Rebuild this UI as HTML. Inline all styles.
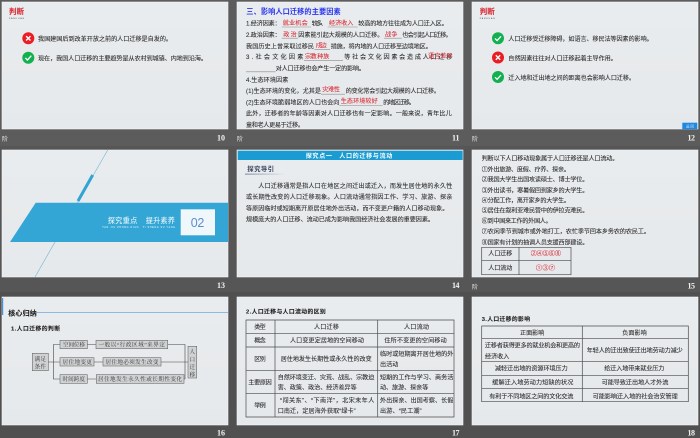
<!DOCTYPE html>
<html lang="zh"><head><meta charset="utf-8"><style>
html,body{margin:0;padding:0;width:700px;height:438px;overflow:hidden;background:#5a5a5a}
svg{display:block;filter:blur(.3px)}
text{font-family:"Liberation Sans","Noto Sans CJK SC",sans-serif;font-size:6.1px;fill:#2e2e2e;stroke:#2e2e2e;stroke-width:.1}
.r{fill:#d8323c;stroke:#d8323c}
.b{font-weight:700;fill:#222;font-size:5.8px}
.n{font-family:"Liberation Serif",serif;font-weight:700;fill:#f4f4f4;font-size:8px;stroke:none}
.g{font-size:6px;fill:#e8e8e8;stroke:none}
.s{font-family:"Liberation Serif","Noto Serif CJK SC",serif;font-size:5.6px;fill:#333;stroke:none}
.w{fill:#fff;stroke:none}
.sl{fill:url(#p);stroke:#f6f7f8;stroke-width:.6}
.ln{stroke:#8a8a8a;stroke-width:.6;fill:none}
.tb{stroke:#4a4a4a;stroke-width:.7;fill:none}
.bx{fill:#cfd2d3;stroke:#6a6a6a;stroke-width:.6}
.c{stroke:#444;stroke-width:.6;fill:none}
</style></head><body>
<svg width="700" height="438" viewBox="0 0 700 438" xmlns="http://www.w3.org/2000/svg">
<defs>
<linearGradient id="p" x1="0" y1="0" x2="0" y2="1"><stop offset="0" stop-color="#e9ecee"/><stop offset="1" stop-color="#e6e9eb"/></linearGradient>
<linearGradient id="u" x1="0" y1="0" x2="1" y2="0"><stop offset="0" stop-color="#5a6a88"/><stop offset="1" stop-color="#e6eaec"/></linearGradient>
<g id="ok"><circle r="6" fill="#12b04f"/><path d="M-3 .2L-.9 2.3L3 -2" stroke="#fff" stroke-width="1.3" fill="none"/></g>
<g id="no"><circle r="6" fill="#ec1c24"/><path d="M-2.2 -2.2L2.2 2.2M2.2 -2.2L-2.2 2.2" stroke="#fff" stroke-width="1.4" fill="none"/></g>
</defs>
<rect width="700" height="146" fill="#5c5c5c"/><rect y="146" width="700" height="146" fill="#565656"/><rect y="292" width="700" height="146" fill="#505050"/>

<!-- slide 10 -->
<rect class="sl" x="2" y="2" width="226" height="127"/>
<text class="r" x="9" y="14" textLength="15" style="font-size:7.5px;font-weight:700">判断</text>
<text x="9" y="19" textLength="15" style="font-size:2px;fill:#333;stroke:none">PANDUAN</text>
<use href="#no" x="28.3" y="38.3"/><use href="#ok" x="28.3" y="57.7"/>
<text x="38" y="41" textLength="134">我国建国后到改革开放之前的人口迁移是自发的。</text>
<text x="38" y="60.4" textLength="169">现在，我国人口迁移的主要趋势是从农村到城镇、内地到沿海。</text>
<text class="g" x="2" y="141">阶</text><text class="n" x="217" y="140.5" textLength="8">10</text>

<!-- slide 11 -->
<rect class="sl" x="237" y="2" width="226" height="127"/>
<text x="246.3" y="14" textLength="94.4" style="font-weight:700;fill:#2a35ee;font-size:7.2px;stroke:none">三、影响人口迁移的主要因素</text>
<text x="246" y="25.7" textLength="34.7">1.经济因素：</text><text class="r" x="282.7" y="25.2" textLength="25">就业机会</text>
<text x="311.7" y="25.7" textLength="15">较多、</text><text class="r" x="329" y="25.2" textLength="24.3">经济收入</text>
<text x="358.3" y="25.7" textLength="89.4">较高的地方往往成为人口迁入区。</text>
<text x="246" y="37.1" textLength="34.7">2.政治因素：</text><text class="r" x="283.3" y="36.4" textLength="13.4">政治</text>
<text x="298.3" y="37.1" textLength="85">因素能引起大规模的人口迁移。</text><text class="r" x="385" y="36.4" textLength="12.3">战争</text>
<text x="402.3" y="37.1" textLength="49.4">也会引起人口迁移。</text>
<text x="246" y="48.4" textLength="68">我国历史上曾采取过移民</text><text class="r" x="315.7" y="47.6" textLength="11">戍边</text>
<text x="330.7" y="48.4" textLength="101">措施，将内地的人口迁移至边境地区。</text>
<text x="246" y="59.1" textLength="57.3">3.社会文化因素</text><text class="r" x="305" y="58.3" textLength="11.7">宗教</text><text class="r" x="317.3" y="58.3" textLength="12">种族</text>
<text x="344.3" y="59.1" textLength="108">等社会文化因素会造成人口迁移</text><text class="r" x="428" y="58" textLength="24.7">语言差异</text>
<text x="275.7" y="70.7" textLength="89.3">对人口迁移也会产生一定的影响。</text>
<text x="246" y="82.1" textLength="42.3">4.生态环境因素</text>
<text x="246" y="93.1" textLength="75">(1)生态环境的变化，尤其是</text><text class="r" x="322.3" y="91.5" textLength="17.7">灾难性</text>
<text x="345.7" y="93.1" textLength="94.3">的变化常会引起大规模的人口迁移。</text>
<text x="246" y="104.4" textLength="93.3">(2)生态环境脆弱地区的人口也会向</text><text class="r" x="340.7" y="103" textLength="37">生态环境较好</text>
<text x="383.3" y="104.4" textLength="31.7">的地区迁移。</text>
<text x="246" y="115.4" textLength="205.7">此外，迁移者的年龄等因素对人口迁移也有一定影响。一般来说，青年比儿</text>
<text x="246" y="127" textLength="58">童和老人更易于迁移。</text>
<path class="ln" d="M281.7 27H311M327.7 27H357.7M281.7 38.2H298M384 38.2H401.7M314.3 49.4H330M304 60.3H343M246 71.8H275.7M321 94.2H345M339.3 105.5H382.7"/>
<text class="g" x="237" y="141">阶</text><text class="n" x="452" y="140.5" textLength="7.5">11</text>

<!-- slide 12 -->
<rect class="sl" x="472" y="2" width="226" height="127"/>
<text class="r" x="479.7" y="14" textLength="15" style="font-size:7.5px;font-weight:700">判断</text>
<text x="479.7" y="19" textLength="15" style="font-size:2px;fill:#333;stroke:none">PANDUAN</text>
<use href="#ok" x="498" y="38.3"/><use href="#no" x="498" y="57.5"/><use href="#ok" x="498" y="77"/>
<text x="508.3" y="41" textLength="144.4">人口迁移受迁移障碍，如语言、移民法等因素的影响。</text>
<text x="508.3" y="60.4" textLength="108.4">自然因素往往对人口迁移起着主导作用。</text>
<text x="508.3" y="80" textLength="126.7">迁入地和迁出地之间的距离也会影响人口迁移。</text>
<rect x="682.3" y="122.7" width="15" height="6.5" fill="#1f88e0"/>
<text x="686" y="127.6" textLength="8" style="font-size:3.6px;fill:#cfe6fa;stroke:none">返回</text>
<text class="g" x="472" y="141">阶</text><text class="n" x="687.5" y="140.5" textLength="7.5">12</text>

<!-- slide 13 -->
<rect class="sl" x="2" y="150" width="226" height="127"/>
<path d="M107.7 150L35 277" stroke="#6db6d6" stroke-width=".6" fill="none"/>
<path d="M92.7 175L78 201" stroke="#31a3d5" stroke-width="3" fill="none"/>
<polygon points="35.7,202.7 228,202.7 228,242 10,242" fill="#33a6d6"/>
<rect x="180.7" y="209.3" width="34.3" height="26" fill="#f0f7fb"/>
<text x="190.7" y="227" textLength="13.6" style="font-size:12.5px;fill:#5a8fcf;stroke:none">02</text>
<text class="w" x="107.7" y="223" textLength="29.6" style="font-size:7.2px">探究重点</text>
<text class="w" x="145.7" y="223" textLength="29.3" style="font-size:7.2px">提升素养</text>
<text class="w" x="102.3" y="228" textLength="36" style="font-size:2.4px">TAN JIU ZHONG DIAN</text>
<text class="w" x="142.7" y="228" textLength="32.3" style="font-size:2.4px">TI SHENG SU YANG</text>
<text class="n" x="217" y="288" textLength="8">13</text>

<!-- slide 14 -->
<rect class="sl" x="237" y="150" width="226" height="127"/>
<rect x="237.7" y="150.7" width="225" height="9.3" fill="#1a9bd1"/>
<text class="w" x="305.7" y="158" textLength="86.6" style="font-weight:700">探究点一　人口的迁移与流动</text>
<text x="247.3" y="171" textLength="26.7" style="font-weight:700;font-size:6.4px;fill:#3b4560;stroke:none">探究导引</text>
<rect x="245" y="173.7" width="40" height=".8" fill="url(#u)"/>
<text x="258.3" y="188.1" textLength="194">人口迁移通常是指人口在地区之间迁出或迁入，而发生居住地的永久性</text>
<text x="246" y="199.1" textLength="206.3">或长期性改变的人口迁移现象。人口流动通常指因工作、学习、旅游、探亲</text>
<text x="246" y="210.4" textLength="202.3">等原因临时或短期离开原居住地外出活动，而不变更户籍的人口移动现象。</text>
<text x="246" y="221.7" textLength="188">规模庞大的人口迁移、流动已成为影响我国经济社会发展的重要因素。</text>
<text class="n" x="452" y="288" textLength="7.5">14</text>

<!-- slide 15 -->
<rect class="sl" x="472" y="150" width="226" height="127"/>
<text x="481.7" y="160.7" textLength="136.6">判断以下人口移动现象属于人口迁移还是人口流动。</text>
<text x="481.7" y="171.4" textLength="88.3">①外出旅游、度假、疗养、探亲。</text>
<text x="481.7" y="181.7" textLength="106.6">②我国大学生出国攻读硕士、博士学位。</text>
<text x="481.7" y="192.4" textLength="106.6">③外出读书，寒暑假回到家乡的大学生。</text>
<text x="481.7" y="202.4" textLength="88.3">④分配工作，离开家乡的大学生。</text>
<text x="481.7" y="212.7" textLength="106.6">⑤居住在叙利亚难民营中的伊拉克难民。</text>
<text x="481.7" y="223.1" textLength="70">⑥到中国来工作的外国人。</text>
<text x="481.7" y="233.7" textLength="168.3">⑦农闲季节到城市或外地打工，农忙季节回本乡务农的农民工。</text>
<text x="481.7" y="244.4" textLength="106.6">⑧国家有计划的抽调人员支援西部建设。</text>
<path class="tb" d="M481.7 247.3H571V274.7H481.7ZM519 247.3V274.7M481.7 260.7H571"/>
<text x="488.3" y="255.7" textLength="24">人口迁移</text><text x="488.3" y="270.1" textLength="24">人口流动</text>
<text class="r" x="530.7" y="255.7" textLength="30.3">②④⑤⑥⑧</text><text class="r" x="536" y="270.1" textLength="19">①③⑦</text>
<text class="g" x="472" y="289">阶</text><text class="n" x="687.5" y="288.5" textLength="7.5">15</text>

<!-- slide 16 -->
<rect class="sl" x="2" y="297" width="226" height="128"/>
<rect x="2" y="298" width="1.2" height="17" fill="#4a90d8"/>
<text class="b" x="8.3" y="315.3" textLength="28.4" style="font-size:7px">核心归纳</text>
<path d="M36.7 312.7H228" stroke="#5a9bd8" stroke-width=".7"/>
<text class="b" x="11" y="330.4" textLength="49">1.人口迁移的判断</text>
<path class="c" d="M48.3 362H53.3M53.3 344.5V379H60M53.3 344.5H60M53.3 362H60M87.3 344.5H96M94 362H103M87.3 379H96.3M167.7 344.5H185V379H184M161 362H188"/>
<rect class="bx" x="32.3" y="353.3" width="16" height="17.4"/>
<rect class="bx" x="60" y="340.3" width="27.3" height="8.4"/><rect class="bx" x="96" y="340.3" width="71.7" height="8.4"/>
<rect class="bx" x="60" y="357.7" width="34" height="8.3"/><rect class="bx" x="103" y="357.7" width="58" height="8.3"/>
<rect class="bx" x="60" y="374.7" width="27.3" height="8.6"/><rect class="bx" x="96.3" y="374.7" width="87.7" height="8.6"/>
<rect class="bx" x="188" y="346.3" width="8.7" height="31.7"/>
<text class="s" x="34.5" y="361" textLength="11.5">满足</text><text class="s" x="34.5" y="368.5" textLength="11.5">条件</text>
<text class="s" x="63" y="346.7" textLength="22">空间位移</text><text class="s" x="98.5" y="346.7" textLength="66.5">一般以“行政区域”来界定</text>
<text class="s" x="62.5" y="364" textLength="29.5">居住地变更</text><text class="s" x="105.5" y="364" textLength="53">居住地必须发生改变</text>
<text class="s" x="62.5" y="381.2" textLength="22.5">时间跨度</text><text class="s" x="98" y="381.2" textLength="84">居住地发生永久性或长期性变化</text>
<text class="s" x="189.5" y="353.5">人</text><text class="s" x="189.5" y="361.5">口</text><text class="s" x="189.5" y="369">迁</text><text class="s" x="189.5" y="376.5">移</text>
<text class="n" x="217" y="435.5" textLength="8">16</text>

<!-- slide 17 -->
<rect class="sl" x="237" y="297" width="226" height="128"/>
<text class="b" x="246" y="313.4" textLength="79.7">2.人口迁移与人口流动的区别</text>
<path class="tb" d="M246 320H454V417H246ZM275 320V417M377.7 320V417M246 333.3H454M246 347H454M246 370.3H454M246 393.3H454"/>
<text x="254.3" y="329.1" textLength="11.4">类型</text><text x="314" y="329.1" textLength="25">人口迁移</text><text x="404" y="329.1" textLength="25">人口流动</text>
<text x="254.3" y="342.7" textLength="11.4">概念</text><text x="290" y="342.7" textLength="74">人口变更定居地的空间移动</text><text x="384.3" y="342.7" textLength="62.4">住所不变更的空间移动</text>
<text x="254.3" y="361.1" textLength="11.4">区别</text><text x="280.7" y="361.1" textLength="91">居住地发生长期性或永久性的改变</text>
<text x="380" y="356.1" textLength="73.3">临时或短期离开居住地的外</text><text x="380" y="366.4" textLength="18.3">出活动</text>
<text x="248.3" y="384.4" textLength="23.4">主要原因</text>
<text x="277.7" y="379.4" textLength="96.6">自然环境变迁、灾荒、战乱、宗教迫</text><text x="277.7" y="389.7" textLength="79">害、政策、政治、经济差异等</text>
<text x="380" y="379.4" textLength="73.3">短期的工作与学习、商务活</text><text x="380" y="389.7" textLength="48.3">动、旅游、探亲等</text>
<text x="254.3" y="407.7" textLength="11.4">举例</text>
<text x="280" y="402.4" textLength="94.3">“闯关东”、“下南洋”，北宋末年人</text><text x="277.7" y="413.1" textLength="78">口南迁，定居海外获取“绿卡”</text>
<text x="380" y="402.4" textLength="73.3">外出探亲、出国考察、长假</text><text x="380" y="413.1" textLength="41.7">出游、“民工潮”</text>
<text class="n" x="452" y="435.5" textLength="7.5">17</text>

<!-- slide 18 -->
<rect class="sl" x="472" y="297" width="226" height="128"/>
<text class="b" x="481.7" y="321.1" textLength="48.3">3.人口迁移的影响</text>
<path class="tb" d="M481.7 326H688.3V401.7H481.7ZM582.3 326V401.7M481.7 338.7H688.3M481.7 361.3H688.3M481.7 375.3H688.3M481.7 388.7H688.3"/>
<text x="520" y="335.1" textLength="24.3">正面影响</text><text x="622.3" y="335.1" textLength="24.4">负面影响</text>
<text x="485" y="347.4" textLength="95">迁移者获得更多的就业机会和更高的</text><text x="485" y="358.7" textLength="24.3">经济收入</text>
<text x="586.7" y="352.4" textLength="96">年轻人的迁出致使迁出地劳动力减少</text>
<text x="495" y="370.7" textLength="72.7">减轻迁出地的资源环境压力</text><text x="604.3" y="370.7" textLength="60">给迁入地带来就业压力</text>
<text x="492.3" y="384.4" textLength="81">缓解迁入地劳动力短缺的状况</text><text x="601.7" y="384.4" textLength="66.6">可能导致迁出地人才外流</text>
<text x="489.3" y="398.4" textLength="84">有利于不同地区之间的文化交流</text><text x="592.7" y="398.4" textLength="85">可能影响迁入地的社会治安管理</text>
<text class="n" x="687.5" y="435.5" textLength="7.5">18</text>
</svg>
</body></html>
